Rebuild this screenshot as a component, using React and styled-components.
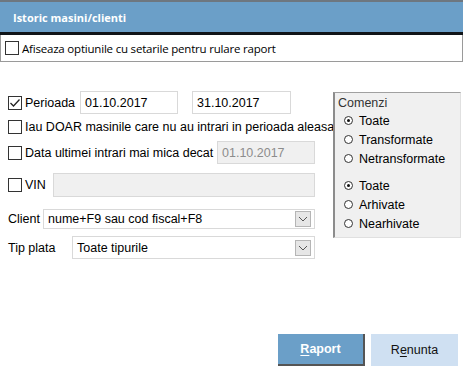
import React from 'react';
import styled, { createGlobalStyle } from 'styled-components';

const GlobalStyle = createGlobalStyle`
  html, body {
    margin: 0;
    padding: 0;
    background: #ffffff;
  }
  body {
    font-family: "Liberation Sans", Arial, sans-serif;
    font-size: 12.5px;
    color: #000;
  }
`;

const Window = styled.div`
  width: 463px;
  height: 384px;
  background: #fff;
  display: flex;
  flex-direction: column;
  border-top: 2px solid #6e7780;
  box-sizing: border-box;
  overflow: hidden;
`;

const TitleBar = styled.div`
  height: 30px;
  background: #6b9fc8;
  display: flex;
  align-items: center;
  padding-left: 13px;
  color: #fff;
  font-family: "Open Sans", "Noto Sans", sans-serif;
  font-weight: 700;
  font-size: 11px;
  border-bottom: 3px solid #101418;
`;

const OptionsBar = styled.div`
  height: 26px;
  display: flex;
  align-items: center;
  gap: 3px;
  padding-left: 4px;
  border: 1px solid #9a9a9a;
  border-top: none;
  font-family: "Open Sans", "Noto Sans", sans-serif;
  font-size: 11.5px;
  letter-spacing: -0.2px;
`;

const Body = styled.div`
  display: flex;
  padding: 29px 0 0 8px;
  gap: 8px;
`;

const LeftCol = styled.div`
  width: 317px;
  display: flex;
  flex-direction: column;
`;

const Row = styled.div`
  display: flex;
  align-items: center;
  height: ${p => p.h || 23}px;
  margin-top: ${p => p.mt || 0}px;
  white-space: nowrap;
`;

const Box = styled.span`
  width: 14px;
  height: 14px;
  box-sizing: border-box;
  border: 1px solid #333;
  background: #fff;
  flex: none;
  display: flex;
  align-items: center;
  justify-content: center;
  margin-right: ${p => p.gap ?? 3}px;
`;

const Label = styled.span`
  width: ${p => (p.w ? p.w + 'px' : 'auto')};
  flex: none;
`;

const Input = styled.div`
  width: ${p => p.w}px;
  height: ${p => p.h || 23}px;
  box-sizing: border-box;
  border: 1px solid #d9d9d9;
  background: ${p => (p.disabled ? '#f0f0f0' : '#fff')};
  color: ${p => (p.disabled ? '#8c8c8c' : '#000')};
  padding-left: 4px;
  display: flex;
  align-items: center;
  margin-left: ${p => p.ml || 0}px;
  flex: none;
`;

const Select = styled(Input)`
  justify-content: space-between;
  padding-right: 3px;
`;

const DropButton = styled.span`
  width: 16px;
  height: 16px;
  box-sizing: border-box;
  border: 1px solid #b5b5b5;
  background: #e6e6e6;
  display: flex;
  align-items: center;
  justify-content: center;
`;

const GroupBox = styled.div`
  width: 128px;
  height: 146px;
  margin-top: 1px;
  box-sizing: border-box;
  background: #f0f0f0;
  border-left: 2px solid #8c8c8c;
  border-top: 1px solid #a0a0a0;
  border-right: 1px solid #e0e0e0;
  border-bottom: 1px solid #e0e0e0;
  padding: 2px 0 0 3px;
  display: flex;
  flex-direction: column;
`;

const GroupTitle = styled.div`
  color: #333;
  height: 16px;
  line-height: 16px;
`;

const RadioGroup = styled.div`
  display: flex;
  flex-direction: column;
  margin-top: ${p => p.mt || 0}px;
`;

const RadioRow = styled.div`
  display: flex;
  align-items: center;
  height: 19px;
  padding-left: 6px;
`;

const Circle = styled.span`
  width: 9px;
  height: 9px;
  box-sizing: border-box;
  border: 1.5px solid #333;
  border-radius: 50%;
  background: #fff;
  margin-right: 6px;
  display: flex;
  align-items: center;
  justify-content: center;
  &::after {
    content: '';
    display: ${p => (p.checked ? 'block' : 'none')};
    width: 3px;
    height: 3px;
    border-radius: 50%;
    background: #111;
  }
`;

const Footer = styled.div`
  margin-top: auto;
  display: flex;
  justify-content: flex-end;
  gap: 6px;
  padding: 0 5px 18px 0;
`;

const Button = styled.button`
  width: 87px;
  height: 32px;
  box-sizing: border-box;
  font-family: "Liberation Sans", Arial, sans-serif;
  font-size: 12.5px;
  cursor: pointer;
  background: ${p => (p.primary ? '#6b9fc8' : '#cfe0f2')};
  color: ${p => (p.primary ? '#fff' : '#111')};
  font-weight: ${p => (p.primary ? 700 : 400)};
  border: none;
  border-right: ${p => (p.primary ? '2px solid #555' : 'none')};
  border-bottom: ${p => (p.primary ? '2px solid #555' : 'none')};
  u {
    text-decoration-thickness: 1px;
    text-underline-offset: 2px;
  }
`;

const Check = () => (
  <svg width="12" height="12" viewBox="0 0 12 12">
    <path d="M1.5 6 L4.5 9 L10.5 2.5" fill="none" stroke="#222" strokeWidth="1.3" />
  </svg>
);

const Chevron = () => (
  <svg width="10" height="6" viewBox="0 0 10 6">
    <path d="M1 1 L5 5 L9 1" fill="none" stroke="#555" strokeWidth="1" />
  </svg>
);

const Radio = ({ checked, children }) => (
  <RadioRow>
    <Circle checked={checked} />
    {children}
  </RadioRow>
);

export default function App() {
  return (
    <>
      <GlobalStyle />
      <Window>
        <TitleBar>Istoric masini/clienti</TitleBar>
        <OptionsBar>
          <Box gap={0} />
          Afiseaza optiunile cu setarile pentru rulare raport
        </OptionsBar>
        <Body>
          <LeftCol>
            <Row>
              <Box>
                <Check />
              </Box>
              <Label w={55}>Perioada</Label>
              <Input w={98}>01.10.2017</Input>
              <Input w={99} ml={14}>31.10.2017</Input>
            </Row>
            <Row h={20} mt={3}>
              <Box />
              <Label>Iau DOAR masinile care nu au intrari in perioada aleasa</Label>
            </Row>
            <Row mt={4}>
              <Box />
              <Label w={192}>Data ultimei intrari mai mica decat</Label>
              <Input w={98} disabled>
                01.10.2017
              </Input>
            </Row>
            <Row h={24} mt={9}>
              <Box />
              <Label w={28}>VIN</Label>
              <Input w={262} h={24} disabled />
            </Row>
            <Row h={20} mt={12}>
              <Label w={35}>Client</Label>
              <Select w={272} h={20}>
                nume+F9 sau cod fiscal+F8
                <DropButton>
                  <Chevron />
                </DropButton>
              </Select>
            </Row>
            <Row mt={7}>
              <Label w={64}>Tip plata</Label>
              <Select w={243}>
                Toate tipurile
                <DropButton>
                  <Chevron />
                </DropButton>
              </Select>
            </Row>
          </LeftCol>
          <GroupBox>
            <GroupTitle>Comenzi</GroupTitle>
            <RadioGroup>
              <Radio checked>Toate</Radio>
              <Radio>Transformate</Radio>
              <Radio>Netransformate</Radio>
            </RadioGroup>
            <RadioGroup mt={8}>
              <Radio checked>Toate</Radio>
              <Radio>Arhivate</Radio>
              <Radio>Nearhivate</Radio>
            </RadioGroup>
          </GroupBox>
        </Body>
        <Footer>
          <Button primary>
            <u>R</u>aport
          </Button>
          <Button>
            R<u>e</u>nunta
          </Button>
        </Footer>
      </Window>
    </>
  );
}
